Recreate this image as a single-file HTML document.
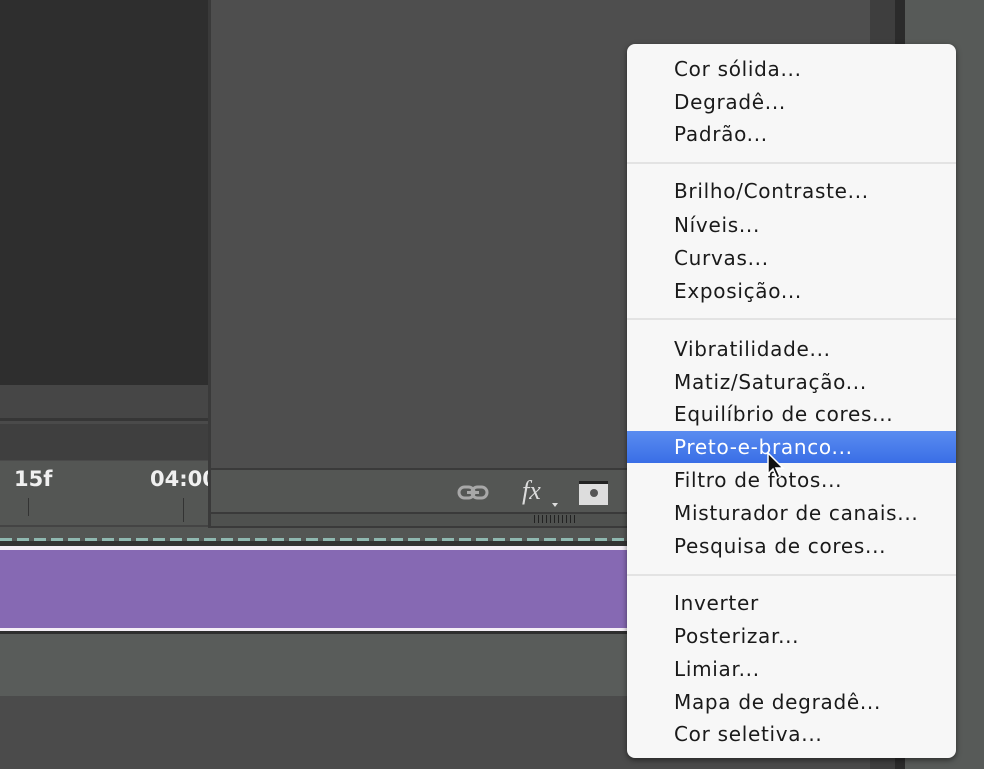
<!DOCTYPE html>
<html><head><meta charset="utf-8"><style>
*{margin:0;padding:0;box-sizing:border-box}
body{width:984px;height:769px;position:relative;overflow:hidden;background:#4a4a4a;font-family:"Liberation Sans","DejaVu Sans",sans-serif}
.a{position:absolute}
.menu{position:absolute;left:627px;top:44px;width:329px;height:714px;background:#f7f7f7;border-radius:8px;box-shadow:0 2px 6px rgba(0,0,0,.5)}
.it{position:absolute;left:47px;font-size:20px;font-family:"DejaVu Sans",sans-serif;letter-spacing:0.7px;color:#1a1a1a;line-height:24px;white-space:nowrap}
.sep{position:absolute;left:0;right:0;height:2px;background:#e3e3e3}
</style></head><body>
<div class="a" style="left:0;top:0;width:208px;height:385px;background:#2e2e2e"></div>
<div class="a" style="left:0;top:385px;width:208px;height:36px;background:#464646;border-bottom:3px solid #363636"></div>
<div class="a" style="left:0;top:424px;width:208px;height:36px;background:#3f3f3f"></div>
<div class="a" style="left:0;top:461px;width:630px;height:80px;background:#545654"></div>
<div class="a" style="left:0;top:462px;width:208px;height:65px;border-bottom:2px solid #444"></div>
<div class="a" style="left:14px;top:467px;font-size:21px;color:#f0f0f0;font-weight:bold;font-family:'DejaVu Sans',sans-serif">15f</div>
<div class="a" style="left:150px;top:467px;font-size:21px;color:#f0f0f0;font-weight:bold;width:58px;overflow:hidden;white-space:nowrap;font-family:'DejaVu Sans',sans-serif">04:00</div>
<div class="a" style="left:28px;top:498px;width:1px;height:18px;background:#333"></div>
<div class="a" style="left:183px;top:498px;width:1px;height:24px;background:#333"></div>
<div class="a" style="left:208px;top:0;width:662px;height:470px;background:#4e4e4e"></div>
<div class="a" style="left:208px;top:468px;width:422px;height:46px;background:#545654;border-top:2px solid #3a3a3a;border-bottom:2px solid #3a3a3a"></div>
<div class="a" style="left:208px;top:514px;width:422px;height:14px;background:#4f514f;border-bottom:2px solid #3a3a3a"></div>
<div class="a" style="left:208px;top:0;width:3px;height:528px;background:#3a3a3a"></div>
<svg class="a" style="left:455px;top:482px" width="40" height="24"><rect x="4" y="5" width="15" height="11" rx="5.5" fill="none" stroke="#a8a8a8" stroke-width="3"/><rect x="17" y="5" width="15" height="11" rx="5.5" fill="none" stroke="#a8a8a8" stroke-width="3"/><line x1="12" y1="10.5" x2="24" y2="10.5" stroke="#a8a8a8" stroke-width="3"/></svg>
<div class="a" style="left:522px;top:476px;font-size:26px;color:#dcdcdc;font-style:italic;font-family:'Liberation Serif',serif">fx</div>
<div class="a" style="left:552px;top:503px;width:0;height:0;border-left:3px solid transparent;border-right:3px solid transparent;border-top:4px solid #ddd"></div>
<div class="a" style="left:579px;top:481px;width:29px;height:24px;background:#ddd;border-top:3px solid #222"></div>
<div class="a" style="left:590px;top:489px;width:8px;height:8px;border-radius:50%;background:#555"></div>
<div class="a" style="left:534px;top:515px;width:42px;height:8px;background:repeating-linear-gradient(90deg,#222 0 1px,transparent 1px 4px)"></div>
<div class="a" style="left:0;top:538px;width:630px;height:3px;background:repeating-linear-gradient(90deg,#8fb8b0 0 12px,transparent 12px 17px)"></div>
<div class="a" style="left:0;top:541px;width:630px;height:5px;background:#333"></div>
<div class="a" style="left:0;top:546px;width:630px;height:4px;background:#f4eef6"></div>
<div class="a" style="left:0;top:550px;width:630px;height:78px;background:#8669b3"></div>
<div class="a" style="left:0;top:628px;width:630px;height:3px;background:#f4eef6"></div>
<div class="a" style="left:0;top:631px;width:630px;height:3px;background:#2e2e2e"></div>
<div class="a" style="left:0;top:634px;width:630px;height:62px;background:#595c5a"></div>
<div class="a" style="left:0;top:696px;width:630px;height:73px;background:#4b4b4b"></div>
<div class="a" style="left:870px;top:0;width:35px;height:769px;background:#3e3e3e"></div>
<div class="a" style="left:895px;top:0;width:10px;height:769px;background:#2b2b2b"></div>
<div class="a" style="left:905px;top:0;width:79px;height:769px;background:#575a58"></div>
<div class="menu">
<div class="it" style="top:13px">Cor sólida...</div>
<div class="it" style="top:46px">Degradê...</div>
<div class="it" style="top:78px">Padrão...</div>
<div class="sep" style="top:118px"></div>
<div class="it" style="top:135px">Brilho/Contraste...</div>
<div class="it" style="top:169px">Níveis...</div>
<div class="it" style="top:202px">Curvas...</div>
<div class="it" style="top:235px">Exposição...</div>
<div class="sep" style="top:274px"></div>
<div class="it" style="top:293px">Vibratilidade...</div>
<div class="it" style="top:326px">Matiz/Saturação...</div>
<div class="it" style="top:358px">Equilíbrio de cores...</div>
<div class="a" style="left:0;top:387px;width:329px;height:32px;background:linear-gradient(#5a8cf0,#3a6ee6)"></div>
<div class="it" style="top:391px;color:#fff">Preto-e-branco...</div>
<div class="it" style="top:424px">Filtro de fotos...</div>
<div class="it" style="top:457px">Misturador de canais...</div>
<div class="it" style="top:490px">Pesquisa de cores...</div>
<div class="sep" style="top:530px"></div>
<div class="it" style="top:547px">Inverter</div>
<div class="it" style="top:580px">Posterizar...</div>
<div class="it" style="top:613px">Limiar...</div>
<div class="it" style="top:646px">Mapa de degradê...</div>
<div class="it" style="top:678px">Cor seletiva...</div>
</div>
<svg class="a" style="left:766px;top:452px" width="20" height="30"><path d="M2 1 L2 22 L7 17 L11 26 L14 24.5 L10 16 L17 16 Z" fill="#111" stroke="#fff" stroke-width="1.5"/></svg>
</body></html>
